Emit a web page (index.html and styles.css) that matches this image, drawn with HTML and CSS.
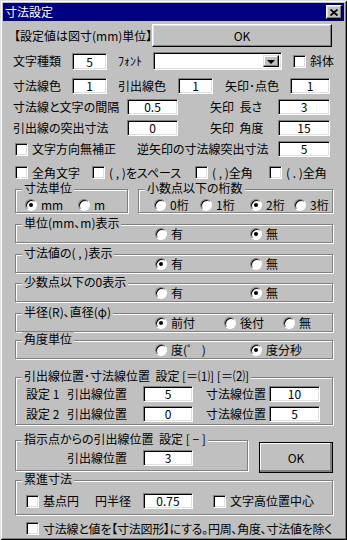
FILE: index.html
```html
<!DOCTYPE html>
<html lang="ja">
<head>
    <meta charset="UTF-8">
    <meta name="viewport" content="width=device-width, initial-scale=1.0">
    <title>寸法設定</title>
    <link rel="stylesheet" href="styles.css">
</head>
<body>
    <div class="window">
        <div class="titlebar">
            <span class="title">寸法設定</span>
            <span class="close-btn">
                <svg width="8" height="7" viewBox="0 0 8 7"><path d="M0.5 0.5L7.5 6.5M7.5 0.5L0.5 6.5" stroke="#000" stroke-width="1.8"/></svg>
            </span>
        </div>

        <div class="row row-head">
            <span class="lbl w138">【設定値は図寸(mm)単位】</span>
            <button class="btn btn-top">OK</button>
        </div>

        <div class="row row-font">
            <span class="lbl w59">文字種類</span>
            <span class="edit tall w35">5</span>
            <span class="lbl ml11 w35">ﾌｫﾝﾄ</span>
            <span class="combo"><span class="combo-btn"><span class="arrow"></span></span></span>
            <span class="check ml11"><span class="box"></span>斜体</span>
        </div>

        <div class="row row-color">
            <span class="lbl w59">寸法線色</span>
            <span class="edit w35">1</span>
            <span class="lbl ml11 w60">引出線色</span>
            <span class="edit w35">1</span>
            <span class="lbl ml12 w65">矢印･点色</span>
            <span class="edit w40">1</span>
        </div>

        <div class="row row-next">
            <span class="lbl w114">寸法線と文字の間隔</span>
            <span class="edit w51">0.5</span>
            <span class="lbl ml32 w68">矢印&nbsp;&nbsp;長さ</span>
            <span class="edit w52">3</span>
        </div>

        <div class="row row-next">
            <span class="lbl w114">引出線の突出寸法</span>
            <span class="edit w51">0</span>
            <span class="lbl ml32 w68">矢印&nbsp;&nbsp;角度</span>
            <span class="edit w52">15</span>
        </div>

        <div class="row row-next pl12">
            <span class="check w122"><span class="box"></span>文字方向無補正</span>
            <span class="lbl w141">逆矢印の寸法線突出寸法</span>
            <span class="edit w52">5</span>
        </div>

        <div class="row row-checks pl12">
            <span class="check w77"><span class="box"></span>全角文字</span>
            <span class="check w103"><span class="box"></span>( , )をスペース</span>
            <span class="check w74"><span class="box"></span>( , )全角</span>
            <span class="check"><span class="box"></span>( . )全角</span>
        </div>

        <div class="group-row">
            <div class="group group-sm w113">
                <span class="legend">寸法単位</span>
                <div class="opts pl9">
                    <span class="radio w53"><span class="dot on"></span>mm</span>
                    <span class="radio"><span class="dot"></span>m</span>
                </div>
            </div>
            <div class="group group-sm ml10 w195">
                <span class="legend">小数点以下の桁数</span>
                <div class="opts pl15">
                    <span class="radio w46"><span class="dot"></span>0桁</span>
                    <span class="radio w50"><span class="dot"></span>1桁</span>
                    <span class="radio w44"><span class="dot on"></span>2桁</span>
                    <span class="radio"><span class="dot"></span>3桁</span>
                </div>
            </div>
        </div>

        <div class="group group-line mt11">
            <span class="legend">単位(mm、m)表示</span>
            <div class="opts pl139">
                <span class="radio w95"><span class="dot"></span>有</span>
                <span class="radio"><span class="dot on"></span>無</span>
            </div>
        </div>

        <div class="group group-line mt11">
            <span class="legend">寸法値の( , )表示</span>
            <div class="opts pl139">
                <span class="radio w95"><span class="dot on"></span>有</span>
                <span class="radio"><span class="dot"></span>無</span>
            </div>
        </div>

        <div class="group group-line mt10">
            <span class="legend">少数点以下の0表示</span>
            <div class="opts pl139">
                <span class="radio w95"><span class="dot"></span>有</span>
                <span class="radio"><span class="dot on"></span>無</span>
            </div>
        </div>

        <div class="group group-line mt11">
            <span class="legend">半径(R)、直径(φ)</span>
            <div class="opts pl139">
                <span class="radio w69"><span class="dot on"></span>前付</span>
                <span class="radio w59"><span class="dot"></span>後付</span>
                <span class="radio"><span class="dot"></span>無</span>
            </div>
        </div>

        <div class="group group-line mt8">
            <span class="legend">角度単位</span>
            <div class="opts pl139">
                <span class="radio w95"><span class="dot"></span>度(゜ )</span>
                <span class="radio"><span class="dot on"></span>度分秒</span>
            </div>
        </div>

        <div class="group group-pos">
            <span class="legend">引出線位置･寸法線位置&nbsp;&nbsp;設定 [＝⑴] [＝⑵]</span>
            <div class="field-row">
                <span class="lbl w41">設定 1</span>
                <span class="lbl w76">引出線位置</span>
                <span class="edit w50">5</span>
                <span class="lbl ml13 w63">寸法線位置</span>
                <span class="edit w51">10</span>
            </div>
            <div class="field-row gap4">
                <span class="lbl w41">設定 2</span>
                <span class="lbl w76">引出線位置</span>
                <span class="edit w50">0</span>
                <span class="lbl ml13 w63">寸法線位置</span>
                <span class="edit w51">5</span>
            </div>
        </div>

        <div class="group-row mt15">
            <div class="group group-point w233">
                <span class="legend">指示点からの引出線位置&nbsp;&nbsp;設定 [ − ]</span>
                <div class="field-row">
                    <span class="lbl w76">引出線位置</span>
                    <span class="edit w50">3</span>
                </div>
            </div>
            <button class="btn btn-default">OK</button>
        </div>

        <div class="group group-cum">
            <span class="legend">累進寸法</span>
            <div class="field-row">
                <span class="check w69"><span class="box"></span>基点円</span>
                <span class="lbl w48">円半径</span>
                <span class="edit w50">0.75</span>
                <span class="check ml20"><span class="box"></span>文字高位置中心</span>
            </div>
        </div>

        <div class="row row-last">
            <span class="check tight"><span class="box"></span>寸法線と値を【寸法図形】にする。円周、角度、寸法値を除く</span>
        </div>
    </div>
</body>
</html>
```

FILE: styles.css
```css
body {
    margin: 0;
    font-family: "Noto Sans CJK JP", sans-serif;
    font-size: 12px;
    font-feature-settings: "palt";
    color: #000;
    background: #c0c0c0;
}

.window {
    width: 347px;
    height: 540px;
    box-sizing: border-box;
    padding: 3px;
    background: #c0c0c0;
    box-shadow: inset 1px 1px #dfdfdf, inset -1px -1px #000, inset 2px 2px #fff, inset -2px -2px #808080;
}

.titlebar {
    height: 18px;
    background: #000080;
    color: #fff;
    display: flex;
    align-items: center;
    justify-content: space-between;
    padding: 0 2px;
}

.title {
    line-height: 18px;
}

.close-btn {
    width: 16px;
    height: 14px;
    box-sizing: border-box;
    background: #c0c0c0;
    border: 1px solid;
    border-color: #fff #000 #000 #fff;
    box-shadow: inset -1px -1px #808080, inset 1px 1px #dfdfdf;
    display: flex;
    align-items: center;
    justify-content: center;
}

/* rows */
.row {
    display: flex;
    align-items: center;
    padding-left: 10px;
}

.row-head {
    margin-top: 3px;
    height: 23px;
    padding-left: 11px;
}

.row-font {
    margin-top: 5px;
    height: 18px;
}

.row-color {
    margin-top: 8px;
    height: 16px;
}

.row-next {
    margin-top: 5px;
    height: 16px;
}

.row-checks {
    margin-top: 9px;
    height: 13px;
}

.row-last {
    margin-top: 7px;
    height: 13px;
    padding-left: 23px;
}

.lbl {
    flex-shrink: 0;
    white-space: nowrap;
    line-height: 14px;
}

/* widgets */
.edit {
    display: block;
    flex-shrink: 0;
    box-sizing: border-box;
    height: 16px;
    background: #fff;
    border: 1px solid;
    border-color: #808080 #fff #fff #808080;
    box-shadow: inset 1px 1px #000, inset -1px -1px #dfdfdf;
    text-align: center;
    line-height: 14px;
}

.edit.tall {
    height: 17px;
    line-height: 15px;
}

.combo {
    display: flex;
    justify-content: flex-end;
    align-items: stretch;
    flex-shrink: 0;
    box-sizing: border-box;
    width: 129px;
    height: 18px;
    padding: 2px;
    background: #fff;
    border: 1px solid;
    border-color: #808080 #fff #fff #808080;
    box-shadow: inset 1px 1px #000, inset -1px -1px #dfdfdf;
}

.combo-btn {
    width: 16px;
    box-sizing: border-box;
    background: #c0c0c0;
    border: 1px solid;
    border-color: #dfdfdf #000 #000 #dfdfdf;
    box-shadow: inset -1px -1px #808080, inset 1px 1px #fff;
    display: flex;
    align-items: center;
    justify-content: center;
}

.arrow {
    width: 0;
    height: 0;
    border-left: 4px solid transparent;
    border-right: 4px solid transparent;
    border-top: 4px solid #000;
    margin-top: 1px;
}

.btn {
    font: inherit;
    color: #000;
    background: #c0c0c0;
    border: 1px solid;
    border-color: #fff #000 #000 #fff;
    box-shadow: inset -1px -1px #808080, inset 1px 1px #dfdfdf;
    padding: 0;
    box-sizing: border-box;
}

.btn-top {
    width: 180px;
    height: 23px;
}

.btn-default {
    width: 74px;
    height: 31px;
    margin-left: 11px;
    margin-top: 2px;
    border-color: #000;
    box-shadow: inset -2px -2px #808080, inset 1px 1px #fff;
}

.check {
    display: flex;
    align-items: center;
    gap: 4px;
    flex-shrink: 0;
    white-space: nowrap;
    line-height: 14px;
}

.check.tight {
    letter-spacing: -0.25px;
}

.box {
    width: 13px;
    height: 13px;
    flex-shrink: 0;
    box-sizing: border-box;
    background: #fff;
    border: 1px solid;
    border-color: #808080 #fff #fff #808080;
    box-shadow: inset 1px 1px #000, inset -1px -1px #dfdfdf;
}

.radio {
    display: flex;
    align-items: center;
    gap: 4px;
    flex-shrink: 0;
    white-space: nowrap;
    line-height: 13px;
}

.dot {
    position: relative;
    width: 12px;
    height: 12px;
    box-sizing: border-box;
    border-radius: 50%;
    background: #fff;
    border: 1px solid;
    border-color: #808080 #fff #fff #808080;
    box-shadow: inset 1px 1px #000;
}

.dot.on::after {
    content: "";
    position: absolute;
    left: 3px;
    top: 3px;
    width: 4px;
    height: 4px;
    border-radius: 50%;
    background: #000;
}

/* group boxes */
.group-row {
    display: flex;
    align-items: flex-start;
    padding-left: 12px;
    margin-top: 10px;
}

.group {
    position: relative;
    box-sizing: border-box;
    border: 1px solid #808080;
    box-shadow: inset 1px 1px #fff, 1px 1px #fff;
}

.group-line,
.group-pos,
.group-cum {
    width: 318px;
    margin-left: 12px;
}

.legend {
    position: absolute;
    top: -9px;
    left: 6px;
    padding: 0 2px;
    background: #c0c0c0;
    line-height: 14px;
    white-space: nowrap;
}

.opts {
    display: flex;
    align-items: center;
    height: 13px;
}

.group-sm {
    padding: 8px 0 1px;
}

.group-line {
    padding: 2px 0;
}

.group-pos {
    margin-top: 18px;
    padding: 8px 0 2px 10px;
}

.group-point {
    padding: 9px 0 4px 51px;
}

.group-cum {
    margin-top: 7px;
    padding: 12px 0 5px 10px;
}

.field-row {
    display: flex;
    align-items: center;
    height: 16px;
}

.gap4 {
    margin-top: 4px;
}

/* spacing helpers */
.mt8 { margin-top: 8px; }
.mt10 { margin-top: 10px; }
.mt11 { margin-top: 11px; }
.mt15 { margin-top: 15px; }

.ml10 { margin-left: 10px; }
.ml11 { margin-left: 11px; }
.ml12 { margin-left: 12px; }
.ml13 { margin-left: 13px; }
.ml20 { margin-left: 20px; }
.ml32 { margin-left: 32px; }

.pl9 { padding-left: 9px; }
.pl12 { padding-left: 12px; }
.pl15 { padding-left: 15px; }
.pl139 { padding-left: 139px; }

.w35 { width: 35px; }
.w40 { width: 40px; }
.w41 { width: 41px; }
.w44 { width: 44px; }
.w46 { width: 46px; }
.w48 { width: 48px; }
.w50 { width: 50px; }
.w51 { width: 51px; }
.w52 { width: 52px; }
.w53 { width: 53px; }
.w59 { width: 59px; }
.w60 { width: 60px; }
.w63 { width: 63px; }
.w65 { width: 65px; }
.w68 { width: 68px; }
.w69 { width: 69px; }
.w74 { width: 74px; }
.w76 { width: 76px; }
.w77 { width: 77px; }
.w95 { width: 95px; }
.w103 { width: 103px; }
.w113 { width: 113px; }
.w114 { width: 114px; }
.w122 { width: 122px; }
.w138 { width: 138px; }
.w141 { width: 141px; }
.w195 { width: 195px; }
.w233 { width: 233px; }
```
